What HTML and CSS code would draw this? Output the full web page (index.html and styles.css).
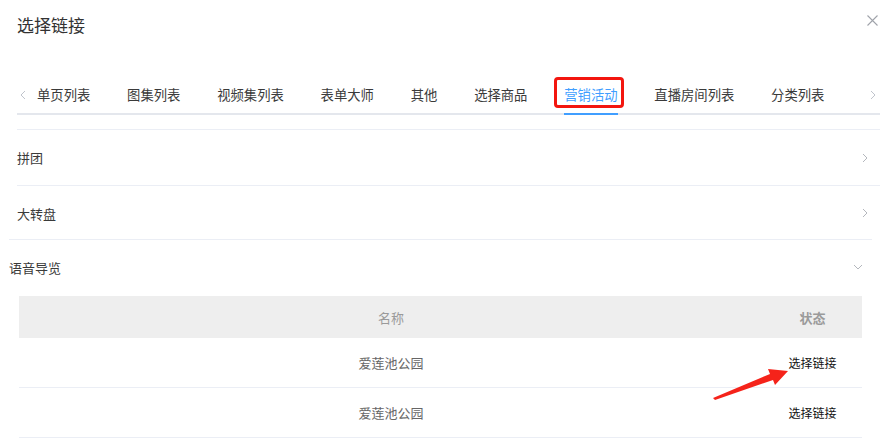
FILE: index.html
```html
<!DOCTYPE html>
<html lang="zh-CN">
<head>
<meta charset="utf-8">
<title>选择链接</title>
<link rel="stylesheet" href="styles.css">
</head>
<body>
<div class="dialog">
  <div class="dialog-header">
    <span class="dialog-title">选择链接</span>
    <button class="close-btn" aria-label="关闭">
      <svg width="11" height="11" viewBox="0 0 11 11"><path d="M0.5 0.5 L10.5 10.5 M10.5 0.5 L0.5 10.5" stroke="#a0a3aa" stroke-width="1.1" fill="none"/></svg>
    </button>
  </div>

  <div class="tabs">
    <span class="tab-arrow prev">
      <svg width="6" height="10" viewBox="0 0 6 10"><path d="M5 1 L1 5 L5 9" stroke="#c0c4cc" stroke-width="1" fill="none"/></svg>
    </span>
    <div class="tab-nav">
      <span class="tab-item">单页列表</span>
      <span class="tab-item">图集列表</span>
      <span class="tab-item">视频集列表</span>
      <span class="tab-item">表单大师</span>
      <span class="tab-item">其他</span>
      <span class="tab-item">选择商品</span>
      <span class="tab-item active">营销活动<span class="mark-box"></span></span>
      <span class="tab-item">直播房间列表</span>
      <span class="tab-item">分类列表</span>
    </div>
    <span class="tab-arrow next">
      <svg width="6" height="10" viewBox="0 0 6 10"><path d="M1 1 L5 5 L1 9" stroke="#c0c4cc" stroke-width="1" fill="none"/></svg>
    </span>
  </div>

  <div class="collapse">
    <div class="collapse-item first">
      <span>拼团</span>
      <svg width="6" height="10" viewBox="0 0 6 10"><path d="M1 1 L5 5 L1 9" stroke="#b4b7bd" stroke-width="1" fill="none"/></svg>
    </div>
    <div class="collapse-item second">
      <span>大转盘</span>
      <svg width="6" height="10" viewBox="0 0 6 10"><path d="M1 1 L5 5 L1 9" stroke="#b4b7bd" stroke-width="1" fill="none"/></svg>
    </div>
  </div>

  <div class="collapse open">
    <div class="collapse-item">
      <span>语音导览</span>
      <svg width="10" height="6" viewBox="0 0 10 6"><path d="M1 1 L5 5 L9 1" stroke="#b4b7bd" stroke-width="1" fill="none"/></svg>
    </div>
    <div class="collapse-content">
      <div class="table">
        <div class="tr th">
          <div class="td name">名称</div>
          <div class="td status">状态</div>
        </div>
        <div class="tr">
          <div class="td name">爱莲池公园</div>
          <div class="td status"><span class="link">选择链接</span></div>
        </div>
        <div class="tr">
          <div class="td name">爱莲池公园</div>
          <div class="td status"><span class="link">选择链接</span></div>
        </div>
      </div>
    </div>
  </div>

  <svg class="annot-arrow" width="891" height="438" viewBox="0 0 891 438">
    <path d="M713 398 L770 374 L768 369 L788 371 L775 385 L773 380 L715 400 Z" fill="#f5231a"/>
  </svg>
</div>
</body>
</html>
```

FILE: styles.css
```css
* { box-sizing: border-box; }

html, body {
  margin: 0;
  padding: 0;
  background: #fff;
}

body {
  font-family: "Noto Sans CJK SC", "Microsoft YaHei", sans-serif;
  color: #3a3a3a;
  width: 891px;
  height: 438px;
  overflow: hidden;
}

.dialog {
  position: relative;
  width: 891px;
  height: 438px;
}

.dialog-header {
  position: relative;
  height: 75px;
  padding: 13px 17px 0;
}

.dialog-title {
  font-size: 17px;
  line-height: 24px;
  color: #333;
}

.close-btn {
  position: absolute;
  top: 15px;
  right: 13px;
  padding: 0;
  border: 0;
  background: none;
  width: 11px;
  height: 11px;
  display: flex;
}

/* Tabs */
.tabs {
  position: relative;
  display: flex;
  align-items: center;
  height: 40px;
  margin: 0 11px 14px 17px;
}

.tabs::after {
  content: "";
  position: absolute;
  left: 0;
  right: 0;
  bottom: 0;
  height: 2px;
  background: #e4e7ed;
}

.tab-arrow {
  display: flex;
  align-items: center;
  height: 40px;
}

.tab-arrow.prev {
  width: 20px;
  padding-left: 3px;
}

.tab-arrow.next {
  width: 20px;
  justify-content: flex-end;
  padding-right: 4px;
  margin-top: -1px;
}

.tab-nav {
  flex: 1;
  display: flex;
  overflow: visible;
  height: 40px;
}

.tab-item {
  position: relative;
  font-size: 13.33px;
  line-height: 40px;
  height: 40px;
  padding: 0 18.4px;
  color: #3a3a3a;
  white-space: nowrap;
}

.tab-item:first-child { padding-left: 0; }

.tab-item.active {
  color: #409eff;
}

.tab-item.active::after {
  content: "";
  position: absolute;
  left: 18.4px;
  right: 18.4px;
  bottom: 0;
  height: 2px;
  background: #409eff;
  z-index: 1;
}

.mark-box {
  position: absolute;
  left: 8px;
  right: 12px;
  top: 2px;
  height: 31px;
  border: 3px solid #f3160f;
  border-radius: 4px;
}

/* Collapse */
.collapse {
  margin: 0 11px 0 17px;
  border-top: 1px solid #ebeef5;
}

.collapse-item {
  display: flex;
  align-items: center;
  justify-content: space-between;
  height: 54px;
  font-size: 13px;
  color: #3a3a3a;
  padding-right: 12px;
}

.collapse-item.first {
  height: 56px;
  border-bottom: 1px solid #ebeef5;
}

.collapse-item.second {
  height: 54px;
}

.collapse.open {
  margin: -1px 19px 0 9px;
}

.collapse.open .collapse-item {
  padding-right: 9px;
}

.collapse-content {
  padding: 2px 10px 0;
}

.table {
  font-size: 13px;
}

.tr {
  display: flex;
  height: 50px;
  border-bottom: 1px solid #ebeef5;
  align-items: center;
}

.tr.th {
  height: 42px;
  background: #eeeeee;
  border-bottom: 0;
  font-weight: bold;
}

.td.name {
  width: 744px;
  text-align: center;
  color: #666;
}

.th .td.name,
.th .td.status {
  color: #9a9a9a;
}

.th .td.name { font-weight: normal; }

.td.status {
  flex: 1;
  text-align: center;
}

.link {
  font-size: 12px;
  color: #111;
}

.annot-arrow {
  position: absolute;
  left: 0;
  top: 0;
  pointer-events: none;
}
```
